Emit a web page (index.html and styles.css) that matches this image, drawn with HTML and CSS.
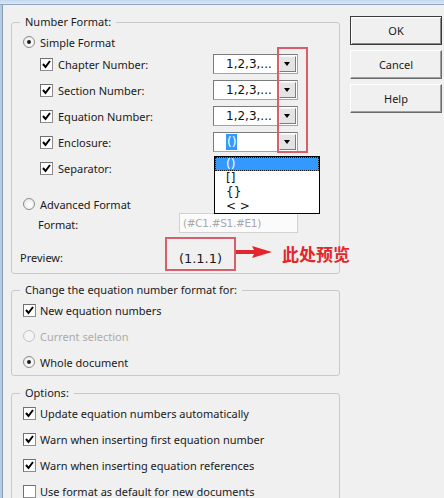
FILE: index.html
```html
<!DOCTYPE html>
<html>
<head>
    <meta charset="UTF-8">
    <title>Format Equation Numbers</title>
    <link rel="stylesheet" href="styles.css">
</head>
<body>
    <div class="frame-top"></div>
    <div class="window">
        <div class="dialog">
            <div class="groups">
                <fieldset class="group group-format">
                    <legend>Number Format:</legend>
                    <div class="line line-simple">
                        <span class="radio on"></span>
                        <span>Simple Format</span>
                    </div>

                    <div class="parts">
                        <div class="part">
                            <span class="check on"><svg viewBox="0 0 11 11"><polyline points="2,5 4.5,8 9,2"/></svg></span>
                            <span class="part-label">Chapter Number:</span>
                            <div class="combo"><span class="combo-text">1,2,3,...</span><span class="combo-btn"></span></div>
                        </div>
                        <div class="part">
                            <span class="check on"><svg viewBox="0 0 11 11"><polyline points="2,5 4.5,8 9,2"/></svg></span>
                            <span class="part-label">Section Number:</span>
                            <div class="combo"><span class="combo-text">1,2,3,...</span><span class="combo-btn"></span></div>
                        </div>
                        <div class="part">
                            <span class="check on"><svg viewBox="0 0 11 11"><polyline points="2,5 4.5,8 9,2"/></svg></span>
                            <span class="part-label">Equation Number:</span>
                            <div class="combo"><span class="combo-text">1,2,3,...</span><span class="combo-btn"></span></div>
                        </div>
                        <div class="part">
                            <span class="check on"><svg viewBox="0 0 11 11"><polyline points="2,5 4.5,8 9,2"/></svg></span>
                            <span class="part-label">Enclosure:</span>
                            <div class="combo">
                                <span class="combo-text"><span class="picked">()</span></span><span class="combo-btn"></span>
                                <ul class="combo-list">
                                    <li class="sel">()</li>
                                    <li>[]</li>
                                    <li>{}</li>
                                    <li>&lt; &gt;</li>
                                </ul>
                            </div>
                        </div>
                        <div class="part">
                            <span class="check on"><svg viewBox="0 0 11 11"><polyline points="2,5 4.5,8 9,2"/></svg></span>
                            <span class="part-label">Separator:</span>
                        </div>
                        <!-- red mark around the drop buttons -->
                        <div class="callout"></div>
                    </div>

                    <div class="line line-advanced">
                        <span class="radio"></span>
                        <span>Advanced Format</span>
                    </div>
                    <div class="line line-field">
                        <span class="field-label">Format:</span>
                        <div class="field">(#C1.#S1.#E1)</div>
                    </div>
                    <div class="line line-preview">
                        <span class="preview-label">Preview:</span>
                        <div class="preview-box">(1.1.1)</div>
                        <svg class="arrow" width="36" height="14" viewBox="0 0 36 14">
                            <rect x="0" y="5" width="20" height="4"/>
                            <polygon points="16,1 36,7 16,13 19,7"/>
                        </svg>
                        <span class="note">此处预览</span>
                    </div>
                </fieldset>

                <fieldset class="group group-scope">
                    <legend>Change the equation number format for:</legend>
                    <div class="opt">
                        <span class="check on"><svg viewBox="0 0 11 11"><polyline points="2,5 4.5,8 9,2"/></svg></span>
                        <span>New equation numbers</span>
                    </div>
                    <div class="opt disabled">
                        <span class="radio"></span>
                        <span>Current selection</span>
                    </div>
                    <div class="opt">
                        <span class="radio on"></span>
                        <span>Whole document</span>
                    </div>
                </fieldset>

                <fieldset class="group group-options">
                    <legend>Options:</legend>
                    <div class="opt">
                        <span class="check on"><svg viewBox="0 0 11 11"><polyline points="2,5 4.5,8 9,2"/></svg></span>
                        <span>Update equation numbers automatically</span>
                    </div>
                    <div class="opt">
                        <span class="check on"><svg viewBox="0 0 11 11"><polyline points="2,5 4.5,8 9,2"/></svg></span>
                        <span>Warn when inserting first equation number</span>
                    </div>
                    <div class="opt">
                        <span class="check on"><svg viewBox="0 0 11 11"><polyline points="2,5 4.5,8 9,2"/></svg></span>
                        <span>Warn when inserting equation references</span>
                    </div>
                    <div class="opt">
                        <span class="check"></span>
                        <span>Use format as default for new documents</span>
                    </div>
                </fieldset>
            </div>

            <div class="buttons">
                <button class="btn btn-default">OK</button>
                <button class="btn">Cancel</button>
                <button class="btn">Help</button>
            </div>
        </div>
    </div>
</body>
</html>
```

FILE: styles.css
```css
html, body {
    margin: 0;
    padding: 0;
}
body {
    width: 444px;
    height: 498px;
    overflow: hidden;
    background: #f0f0f0;
    font-family: "Noto Sans", "DejaVu Sans", sans-serif;
    font-size: 11px;
    color: #1a1a1a;
}
.frame-top {
    height: 4px;
    background: linear-gradient(#c2d7ee, #dbe8f6);
    border-bottom: 1px solid #93a8c0;
}
.window {
    height: 493px;
    border-left: 2px solid #b5cbe3;
}
.dialog {
    display: flex;
    align-items: flex-start;
    gap: 10px;
    height: 100%;
    border-left: 1px solid #8a9db3;
    padding: 10px 2px 0 8px;
}
.groups {
    width: 329px;
    flex: none;
    display: flex;
    flex-direction: column;
}
.group {
    margin: 0;
    padding: 0;
    min-width: 0;
    border: 1px solid #c9c9c9;
    border-radius: 3px;
}
.group legend {
    margin-left: 8px;
    padding: 0 5px;
    line-height: 14px;
}
.group-format {
    padding-bottom: 2px;
}
.group-scope {
    margin-top: 9px;
}
.group-options {
    margin-top: 10px;
}

/* radio and check marks */
.radio {
    flex: none;
    position: relative;
    width: 12px;
    height: 12px;
    box-sizing: border-box;
    border: 1px solid #8b8b8b;
    border-radius: 50%;
    background: radial-gradient(circle at 60% 60%, #ffffff, #e4e4e4);
    margin-right: 5px;
}
.radio.on::after {
    content: "";
    position: absolute;
    left: 3px;
    top: 3px;
    width: 4px;
    height: 4px;
    border-radius: 50%;
    background: #1c1c1c;
}
.check {
    flex: none;
    width: 13px;
    height: 13px;
    box-sizing: border-box;
    border: 1px solid #8d8d8d;
    border-top-color: #707070;
    border-left-color: #707070;
    background: #fff;
    margin-right: 5px;
}
.check svg {
    display: block;
    width: 11px;
    height: 11px;
}
.check polyline {
    fill: none;
    stroke: #000;
    stroke-width: 2;
}

.line {
    display: flex;
    align-items: center;
    white-space: nowrap;
}
.line-simple {
    height: 18px;
    margin-top: 4px;
    padding-left: 11px;
}
.parts {
    position: relative;
}
.part {
    display: flex;
    align-items: center;
    height: 26px;
    padding-left: 28px;
}
.part-label {
    flex: 1;
}
.combo {
    position: relative;
    display: flex;
    align-items: center;
    width: 85px;
    height: 20px;
    box-sizing: border-box;
    margin-right: 41px;
    border: 1px solid #a5a5a5;
    border-top-color: #7b7b7b;
    border-left-color: #7b7b7b;
    background: #fff;
    font-family: "DejaVu Sans", sans-serif;
    font-size: 12px;
    color: #111;
}
.combo-text {
    flex: 1;
    padding-left: 12px;
    line-height: 16px;
}
.picked {
    background: #3399ff;
    color: #fff;
    padding: 1px 1px;
}
.combo-btn {
    position: relative;
    width: 17px;
    height: 16px;
    box-sizing: border-box;
    margin-right: 1px;
    border: 1px solid;
    border-color: #f6f6f6 #7c7c7c #7c7c7c #f6f6f6;
    background: #e4e4e4;
}
.combo-btn::after {
    content: "";
    position: absolute;
    left: 4px;
    top: 5px;
    border-left: 3.5px solid transparent;
    border-right: 3.5px solid transparent;
    border-top: 4px solid #000;
}
.combo-list {
    position: absolute;
    left: 0;
    top: 23px;
    z-index: 2;
    width: 106px;
    box-sizing: border-box;
    margin: 0;
    padding: 0;
    list-style: none;
    border: 1px solid #000;
    background: #fff;
}
.combo-list li {
    height: 14px;
    line-height: 14px;
    padding-left: 11px;
}
.combo-list li.sel {
    background: #3399ff;
    color: #fff;
    outline: 1px dotted #1a1a1a;
    outline-offset: -1px;
}
.callout {
    position: absolute;
    left: 265px;
    top: -4px;
    width: 31px;
    height: 106px;
    box-sizing: border-box;
    border: 2px solid #d85e6a;
    z-index: 3;
}

.line-advanced {
    height: 18px;
    margin-top: 14px;
    padding-left: 11px;
}
.line-field {
    height: 20px;
    padding-left: 26px;
}
.field-label {
    width: 141px;
    padding-top: 3px;
}
.field {
    width: 119px;
    height: 20px;
    box-sizing: border-box;
    border: 1px solid #d2d2d2;
    background: #fbfbfb;
    color: #a9a9a9;
    font-family: "DejaVu Sans", sans-serif;
    font-size: 10.5px;
    letter-spacing: -0.3px;
    line-height: 18px;
    padding-left: 3px;
}
.line-preview {
    height: 34px;
    margin-top: 4px;
}
.line-preview > * {
    flex: none;
}
.preview-label {
    width: 145px;
    margin-left: 8px;
    padding-top: 6px;
}
.preview-box {
    display: flex;
    justify-content: center;
    align-items: center;
    width: 71px;
    height: 34px;
    box-sizing: border-box;
    padding-top: 8px;
    border: 2px solid #d85e6a;
    font-family: "DejaVu Sans", sans-serif;
    font-size: 13px;
    color: #1a1a1a;
}
.arrow {
    margin-top: -4px;
    fill: #e3262c;
}
.note {
    margin-left: 10px;
    color: #e3262c;
    font-family: "Noto Sans CJK SC", sans-serif;
    font-size: 17px;
    font-weight: bold;
    line-height: 20px;
}

.opt {
    display: flex;
    align-items: center;
    height: 26px;
    padding-left: 11px;
    white-space: nowrap;
}
.opt .check {
    margin-right: 4px;
}
.opt.disabled {
    color: #ababab;
}
.opt.disabled .radio {
    border-color: #c4c4c4;
    background: #f4f4f4;
}

.buttons {
    width: 92px;
    flex: none;
    display: flex;
    flex-direction: column;
    gap: 5px;
    margin-top: 1px;
}
.btn {
    height: 29px;
    padding: 0;
    font-family: "Noto Sans", sans-serif;
    font-size: 11px;
    color: #1a1a1a;
    background: #f0f0f0;
    border: 1px solid;
    border-color: #ffffff #6a6a6a #6a6a6a #ffffff;
    box-shadow: inset -1px -1px #a0a0a0;
}
.btn-default {
    border-color: #3a3a3a;
    box-shadow: inset 1px 1px #ffffff, inset -1px -1px #8a8a8a;
}
```
